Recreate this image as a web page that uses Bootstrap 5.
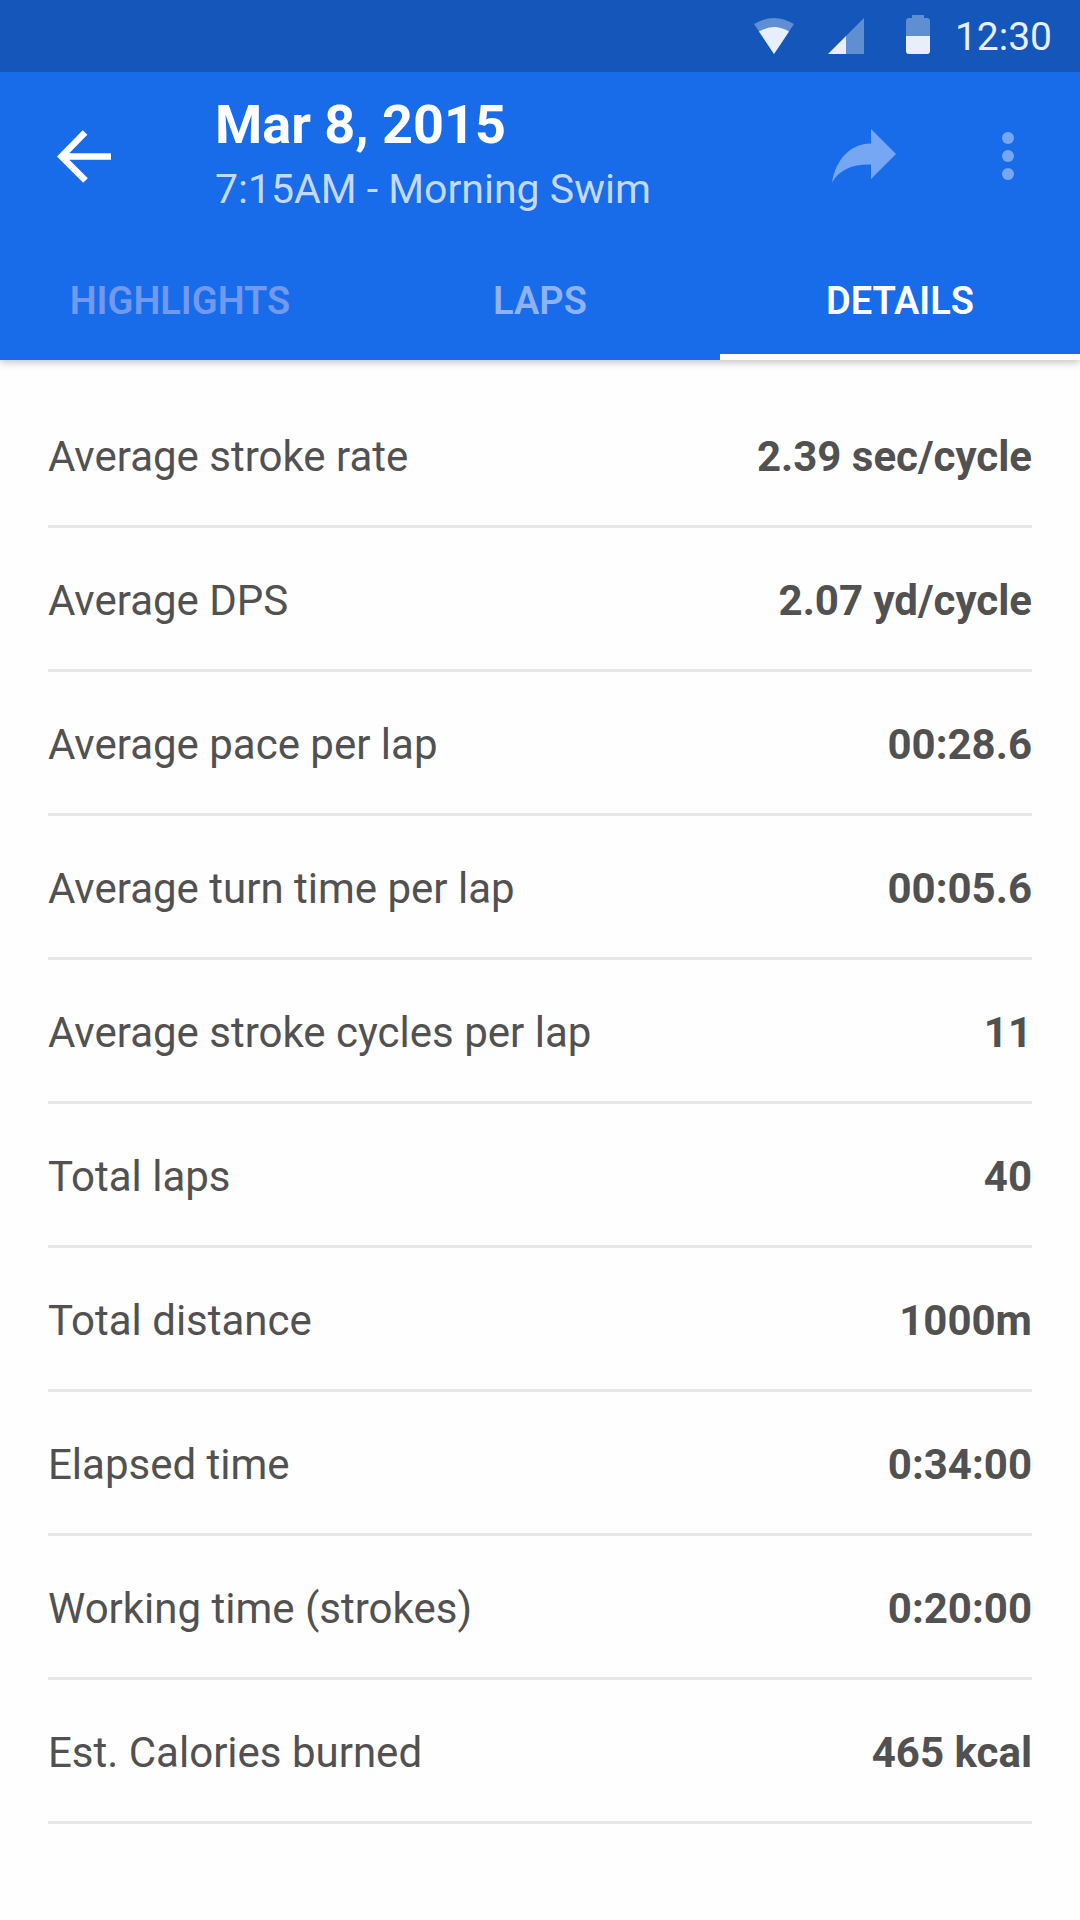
<!DOCTYPE html>
<html lang="en">
<head>
<meta charset="utf-8">
<meta name="viewport" content="width=device-width, initial-scale=1">
<title>Morning Swim - Details</title>
<link href="https://cdn.jsdelivr.net/npm/bootstrap@5.3.0/dist/css/bootstrap.min.css" rel="stylesheet">
<style>
  body { font-family: Roboto, "Noto Sans", sans-serif; font-size: 42px; line-height: 48px; color: #515151; background: #fefefe; }
  svg { display: block; }
  .status-bar { height: 72px; padding-right: 28px; background: #1556ba; color: #e8effa; font-size: 39px; }
  .status-icons { gap: 24px; }
  .status-clock { margin-left: 13px; padding-top: 2px; }
  .app-header { background: #186ce9; box-shadow: 0 2px 8px rgba(0, 0, 0, .25); }
  .app-toolbar { height: 168px; padding: 0 36px 0 48px; }
  .tool-btn { padding: 0; border: 0; border-radius: 0; color: #fff; }
  .tool-btn.dimmed { color: #75a7f2; }
  .tool-btn:hover { color: #fff; }
  .heading-block { margin-left: 95px; }
  .heading-title { font-size: 54px; line-height: 66px; color: #fff; }
  .heading-sub { font-size: 41px; line-height: 62px; color: #c5d9fa; }
  .tool-actions { gap: 72px; }
  .app-tabs .nav-link { padding: 37px 0 29px; border-bottom: 6px solid transparent; border-radius: 0; font-size: 38px; font-weight: 600; color: #8fb2f4; }
  .app-tabs .nav-link.distant { color: #7199ed; }
  .app-tabs .nav-link.active { color: #fff; border-color: #fff; }
  .details-area { padding: 24px 48px; }
  .details-table { border-collapse: separate; border-spacing: 0; }
  .details-table th, .details-table td { padding: 49px 0 44px; border-bottom: 3px solid #e6e6e6; }
</style>
</head>
<body>
<header class="app-header">
  <div class="status-bar d-flex align-items-center justify-content-end">
    <div class="status-icons d-flex">
      <svg width="48" height="48" viewBox="0 0 48 48" role="img" aria-label="Wi-Fi">
        <path fill="#5f8ed2" d="M4 12Q24 0 44 12L24 42z"/>
        <path fill="#e8effa" d="M9 19.500Q24 10.500 39 19.500L24 42z"/>
      </svg>
      <svg width="48" height="48" viewBox="0 0 48 48" role="img" aria-label="Mobile signal">
        <path fill="#5f8ed2" d="M24 24 42 6V42H24z"/>
        <path fill="#e8effa" d="M6 42 24 24V42z"/>
      </svg>
      <svg width="48" height="48" viewBox="0 0 48 48" role="img" aria-label="Battery">
        <path fill="#5f8ed2" d="M12 24V9q0-3 3-3h3V3h12v3h3q3 0 3 3v15z"/>
        <path fill="#e8effa" d="M12 24h24v15q0 3-3 3H15q-3 0-3-3z"/>
      </svg>
    </div>
    <span class="status-clock">12:30</span>
  </div>
  <div class="app-toolbar d-flex align-items-center">
    <button type="button" class="btn tool-btn" aria-label="Back">
      <svg width="72" height="72" viewBox="0 0 72 72" fill="none" stroke="currentColor" stroke-width="6.500"><path d="M63 36.500H14M37 12.500 13.500 36.500l24 24"/></svg>
    </button>
    <div class="heading-block flex-grow-1">
      <h1 class="heading-title fw-bold m-0">Mar 8, 2015</h1>
      <p class="heading-sub m-0">7:15AM - Morning Swim</p>
    </div>
    <div class="tool-actions d-flex">
      <button type="button" class="btn tool-btn dimmed" aria-label="Share">
        <svg width="72" height="72" viewBox="0 0 72 72" fill="currentColor"><path d="M43 9 68 34 43 59V44.500C25 44 12 49 4 62.500 8 39 22 24 43 23.500z"/></svg>
      </button>
      <button type="button" class="btn tool-btn dimmed" aria-label="More options">
        <svg width="72" height="72" viewBox="0 0 72 72" fill="currentColor"><circle cx="36" cy="18" r="6"/><circle cx="36" cy="36" r="6"/><circle cx="36" cy="54" r="6"/></svg>
      </button>
    </div>
  </div>
  <nav class="app-tabs nav nav-justified" aria-label="Workout sections">
    <a class="nav-link distant" href="#highlights">HIGHLIGHTS</a>
    <a class="nav-link" href="#laps">LAPS</a>
    <a class="nav-link active" href="#details" aria-current="page">DETAILS</a>
  </nav>
</header>
<main class="details-area" id="details">
  <table class="details-table w-100">
    <tbody>
      <tr><th class="fw-normal" scope="row">Average stroke rate</th><td class="fw-bold text-end">2.39 sec/cycle</td></tr>
      <tr><th class="fw-normal" scope="row">Average DPS</th><td class="fw-bold text-end">2.07 yd/cycle</td></tr>
      <tr><th class="fw-normal" scope="row">Average pace per lap</th><td class="fw-bold text-end">00:28.6</td></tr>
      <tr><th class="fw-normal" scope="row">Average turn time per lap</th><td class="fw-bold text-end">00:05.6</td></tr>
      <tr><th class="fw-normal" scope="row">Average stroke cycles per lap</th><td class="fw-bold text-end">11</td></tr>
      <tr><th class="fw-normal" scope="row">Total laps</th><td class="fw-bold text-end">40</td></tr>
      <tr><th class="fw-normal" scope="row">Total distance</th><td class="fw-bold text-end">1000m</td></tr>
      <tr><th class="fw-normal" scope="row">Elapsed time</th><td class="fw-bold text-end">0:34:00</td></tr>
      <tr><th class="fw-normal" scope="row">Working time (strokes)</th><td class="fw-bold text-end">0:20:00</td></tr>
      <tr><th class="fw-normal" scope="row">Est. Calories burned</th><td class="fw-bold text-end">465 kcal</td></tr>
    </tbody>
  </table>
</main>
<script src="https://cdn.jsdelivr.net/npm/bootstrap@5.3.0/dist/js/bootstrap.bundle.min.js"></script>
</body>
</html>
